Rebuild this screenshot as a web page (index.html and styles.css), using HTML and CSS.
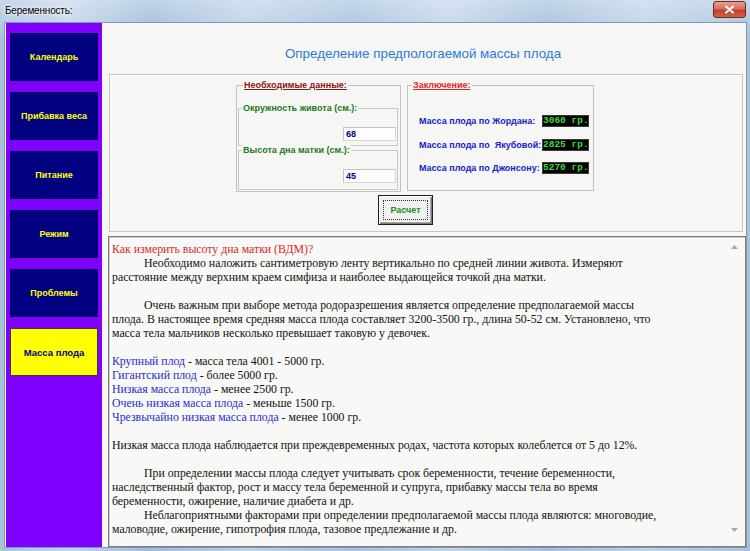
FILE: index.html
```html
<!DOCTYPE html>
<html lang="ru">
<head>
<meta charset="utf-8">
<title>Беременность</title>
<link rel="stylesheet" href="styles.css">
</head>
<body>
<div class="window">
  <div class="titlebar">
    <span class="title">Беременность:</span>
    <div class="close"><svg width="11" height="9" viewBox="0 0 11 9"><path d="M2 1.5 L9 7.5 M9 1.5 L2 7.5" stroke="#fff" stroke-width="2" stroke-linecap="round"/></svg></div>
  </div>
  <div class="client">
    <nav class="sidebar">
      <div class="nav-btn">Календарь</div>
      <div class="nav-btn">Прибавка веса</div>
      <div class="nav-btn">Питание</div>
      <div class="nav-btn">Режим</div>
      <div class="nav-btn">Проблемы</div>
      <div class="nav-btn active">Масса плода</div>
    </nav>
    <div class="main">
      <div class="heading">Определение предпологаемой массы плода</div>
      <div class="panel">
        <div class="groups">
          <div class="group group-input">
            <span class="legend legend-dark">Необходимые данные:</span>
            <div class="subgroup sub1">
              <span class="legend legend-green">Окружность живота (см.):</span>
              <div class="field">68</div>
            </div>
            <div class="subgroup sub2">
              <span class="legend legend-green">Высота дна матки (см.):</span>
              <div class="field">45</div>
            </div>
          </div>
          <div class="group group-result">
            <span class="legend legend-red">Заключение:</span>
            <div class="rows">
              <div class="row"><span class="label">Масса плода по Жордана:</span><span class="lcd">3060 гр.</span></div>
              <div class="row"><span class="label">Масса плода по&nbsp; Якубовой:</span><span class="lcd">2825 гр.</span></div>
              <div class="row"><span class="label">Масса плода по Джонсону:</span><span class="lcd">5270 гр.</span></div>
            </div>
          </div>
        </div>
        <div class="calc"><span class="calc-inner">Расчет</span></div>
      </div>
      <div class="memo">
        <div class="memo-text">
          <div class="ln red">Как измерить высоту дна матки (ВДМ)?</div>
          <div class="ln ind">Необходимо наложить сантиметровую ленту вертикально по средней линии живота. Измеряют</div>
          <div class="ln">расстояние между верхним краем симфиза и наиболее выдающейся точкой дна матки.</div>
          <div class="ln">&nbsp;</div>
          <div class="ln ind">Очень важным при выборе метода родоразрешения является определение предполагаемой массы</div>
          <div class="ln">плода. В настоящее время средняя масса плода составляет 3200-3500 гр., длина 50-52 см. Установлено, что</div>
          <div class="ln">масса тела мальчиков несколько превышает таковую у девочек.</div>
          <div class="ln">&nbsp;</div>
          <div class="ln"><span class="blue">Крупный плод</span> - масса тела 4001 - 5000 гр.</div>
          <div class="ln"><span class="blue">Гигантский плод</span> - более 5000 гр.</div>
          <div class="ln"><span class="blue">Низкая масса плода</span> - менее 2500 гр.</div>
          <div class="ln"><span class="blue">Очень низкая масса плода</span> - меньше 1500 гр.</div>
          <div class="ln"><span class="blue">Чрезвычайно низкая масса плода</span> - менее 1000 гр.</div>
          <div class="ln">&nbsp;</div>
          <div class="ln">Низкая масса плода наблюдается при преждевременных родах, частота которых колеблется от 5 до 12%.</div>
          <div class="ln">&nbsp;</div>
          <div class="ln ind">При определении массы плода следует учитывать срок беременности, течение беременности,</div>
          <div class="ln">наследственный фактор, рост и массу тела беременной и супруга, прибавку массы тела во время</div>
          <div class="ln">беременности, ожирение, наличие диабета и др.</div>
          <div class="ln ind">Неблагоприятными факторами при определении предполагаемой массы плода являются: многоводие,</div>
          <div class="ln">маловодие, ожирение, гипотрофия плода, тазовое предлежание и др.</div>
        </div>
        <div class="scroll">
          <svg width="7" height="4" viewBox="0 0 7 4"><path d="M0 4 L3.5 0 L7 4 Z" fill="#a8a8a8"/></svg>
          <svg width="7" height="4" viewBox="0 0 7 4"><path d="M0 0 L7 0 L3.5 4 Z" fill="#a8a8a8"/></svg>
        </div>
      </div>
    </div>
  </div>
</div>
</body>
</html>
```

FILE: styles.css
```css
html, body {
  margin: 0;
  padding: 0;
}
body {
  width: 750px;
  height: 551px;
  overflow: hidden;
  background: #a9c4e1;
  font-family: "Liberation Sans", Arial, sans-serif;
}
.window {
  width: 750px;
  height: 551px;
  display: flex;
  flex-direction: column;
  background:
    linear-gradient(to bottom, rgba(255,255,255,0.35), rgba(255,255,255,0) 40px),
    linear-gradient(90deg, #a8c2de 0%, #c2d5ea 9%, #9fbbdb 20%, #bdd1e8 33%, #a6c1df 47%, #c1d4ea 60%, #a3bedc 73%, #bed2e9 86%, #a7c2df 100%);
}
.titlebar {
  height: 22px;
  flex: none;
  display: flex;
  justify-content: space-between;
  align-items: flex-start;
  padding-left: 5px;
}
.title {
  margin-top: 5px;
  font-size: 10px;
  line-height: 12px;
  letter-spacing: -0.2px;
  color: #000;
  text-shadow: 0 0 5px #fff, 0 0 3px #fff;
}
.close {
  width: 33px;
  height: 17px;
  box-sizing: border-box;
  margin: 1px 4px 0 0;
  border: 1px solid #6e2a22;
  border-radius: 3px;
  background: linear-gradient(to bottom, #e6a08f 0%, #d7705c 45%, #c2402c 55%, #cf6148 100%);
  display: flex;
  align-items: center;
  justify-content: center;
}
.client {
  flex: 1;
  margin: 0 3px 3px 4px;
  border: 1px solid #8296ad;
  background: #f6f6f4;
  display: flex;
}
.sidebar {
  width: 96px;
  box-sizing: border-box;
  margin-left: 1px;
  padding: 10px 4px 0 4px;
  background: #8000ff;
  display: flex;
  flex-direction: column;
  gap: 11px;
}
.nav-btn {
  height: 48px;
  box-sizing: border-box;
  background: #000080;
  border: 1px solid #000058;
  color: #ffff00;
  font-weight: bold;
  font-size: 9px;
  display: flex;
  align-items: center;
  justify-content: center;
}
.nav-btn.active {
  background: #ffff00;
  color: #000080;
  border: 1px solid #3a3a3a;
  font-size: 9.5px;
}
.main {
  flex: 1;
  display: flex;
  flex-direction: column;
  padding-left: 6px;
}
.heading {
  height: 51px;
  box-sizing: border-box;
  padding: 9px 8px 0 0;
  display: flex;
  align-items: center;
  justify-content: center;
  font-size: 13.4px;
  color: #2b7bd6;
}
.panel {
  height: 158px;
  box-sizing: border-box;
  margin: 0 3px 0 1px;
  border: 1px solid #c6c6c6;
  box-shadow: inset 1px 1px 0 #ffffff;
  padding: 10px 0 0 126px;
  display: flex;
  flex-direction: column;
}
.groups {
  display: flex;
  gap: 6px;
}
.group {
  box-sizing: border-box;
  border: 1px solid #c2c2c2;
  display: flex;
  flex-direction: column;
}
.group-input {
  width: 165px;
  height: 107px;
  padding: 0 2px 0 1px;
}
.group-result {
  width: 187px;
  height: 106px;
}
.legend {
  align-self: flex-start;
  margin: -7px 0 0 4px;
  padding: 0 1px;
  height: 13px;
  line-height: 13px;
  background: #f6f6f4;
  font-size: 9px;
  font-weight: bold;
  white-space: nowrap;
}
.legend-dark {
  margin-left: 5px;
  color: #8a1616;
  text-decoration: underline;
}
.legend-red {
  color: #e02424;
  text-decoration: underline;
}
.legend-green {
  margin-left: 3px;
  color: #1d7a1d;
}
.subgroup {
  box-sizing: border-box;
  border: 1px solid #c8c8c8;
  display: flex;
  flex-direction: column;
}
.sub1 {
  margin-top: 16px;
  height: 38px;
}
.sub2 {
  margin-top: 4px;
  height: 40px;
}
.field {
  align-self: flex-end;
  margin: auto 1px 4px 0;
  width: 53px;
  height: 14px;
  box-sizing: border-box;
  border: 1px solid #d6d6d6;
  border-top-color: #c4c4c4;
  border-left-color: #c4c4c4;
  background: #fdfdfd;
  padding-left: 2px;
  font-size: 9px;
  line-height: 12px;
  font-weight: bold;
  color: #000080;
}
.sub2 .field {
  margin-bottom: 6px;
}
.rows {
  margin-top: 23px;
  display: flex;
  flex-direction: column;
  gap: 11.5px;
}
.row {
  height: 12px;
  padding: 0 4px 0 11px;
  display: flex;
  justify-content: space-between;
  align-items: center;
}
.label {
  font-size: 9px;
  font-weight: bold;
  color: #1a1acc;
  white-space: nowrap;
}
.lcd {
  width: 47px;
  height: 12px;
  box-sizing: border-box;
  background: #000;
  border: 1px solid #3a3a3a;
  color: #3fd83f;
  font-family: "Liberation Mono", "DejaVu Sans Mono", monospace;
  font-weight: bold;
  font-size: 9.5px;
  line-height: 10px;
  text-align: center;
  white-space: nowrap;
}
.calc {
  margin: 3px 0 0 142px;
  width: 55px;
  height: 30px;
  box-sizing: border-box;
  border: 1px solid #1e1e1e;
  box-shadow: inset 1px 1px 0 #ffffff, inset -1px -1px 0 #7a7a7a, inset -2px -2px 0 #a8a8a8;
  background: #f0f0f0;
  padding: 4px;
  display: flex;
}
.calc-inner {
  flex: 1;
  border: 1px dotted #333;
  display: flex;
  align-items: center;
  justify-content: center;
  font-size: 9px;
  font-weight: bold;
  color: #1f8a1f;
}
.memo {
  flex: 1;
  margin-top: 4px;
  display: flex;
  border: 1px solid #7e7e7e;
  box-shadow: inset 1px 1px 0 #c8c8c8;
  background: #f8f8f6;
}
.memo-text {
  flex: 1;
  padding: 5px 0 0 3px;
  font-family: "Liberation Serif", "Times New Roman", serif;
  font-size: 11.8px;
  line-height: 14px;
  color: #111;
  white-space: nowrap;
}
.ind {
  padding-left: 32px;
}
.red {
  color: #d42a2a;
}
.blue {
  color: #2b2bcc;
}
.scroll {
  width: 22px;
  display: flex;
  flex-direction: column;
  justify-content: space-between;
  align-items: center;
  padding: 8px 0 14px;
}
```
